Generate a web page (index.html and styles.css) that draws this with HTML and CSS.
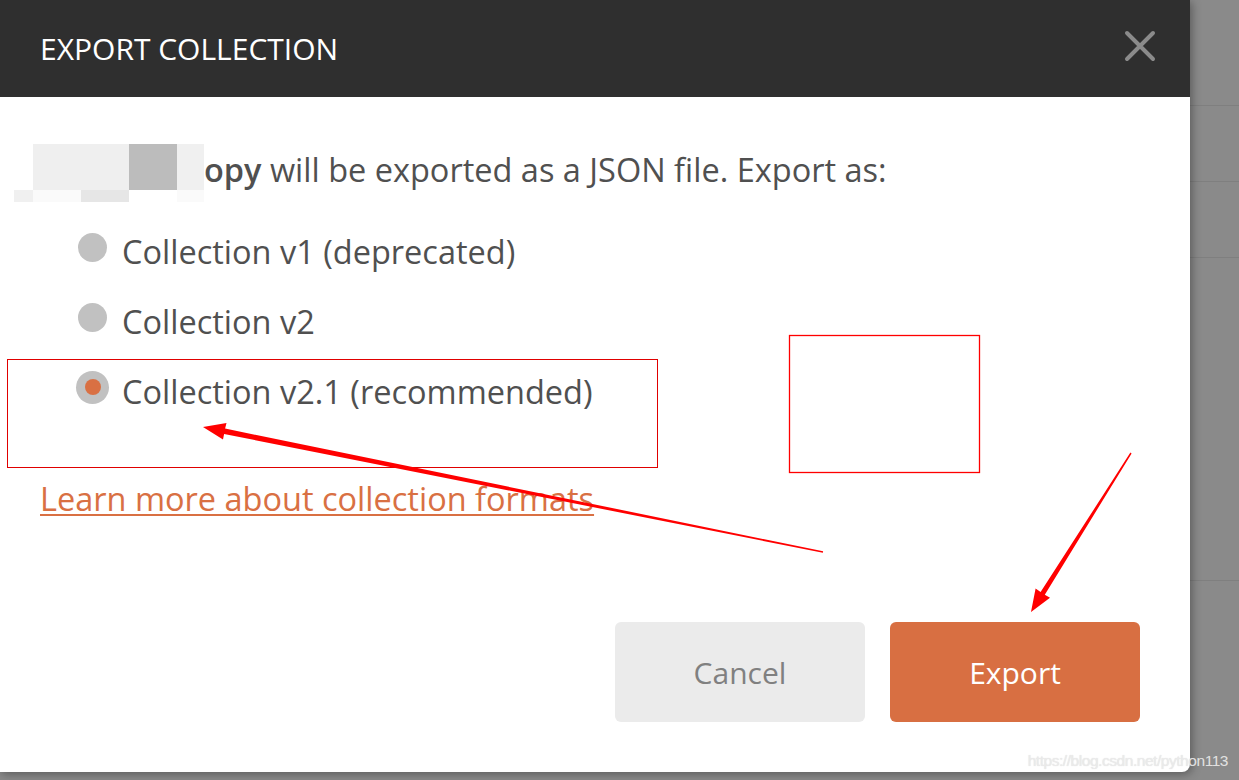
FILE: index.html
```html
<!DOCTYPE html>
<html lang="en">
<head>
    <meta charset="UTF-8">
    <meta name="viewport" content="width=device-width, initial-scale=1.0">
    <title>Export Collection</title>
    <link rel="stylesheet" href="styles.css">
</head>
<body>
    <!-- app behind the modal -->
    <div class="backdrop">
        <div class="row row-top"></div>
        <div class="row"></div>
        <div class="row"></div>
        <div class="row row-tall"></div>
        <div class="row row-last"></div>
    </div>

    <div class="modal">
        <div class="modal-header">
            <h2>EXPORT COLLECTION</h2>
            <svg class="close" width="32" height="32" viewBox="0 0 32 32">
                <path d="M3 3 L29 29 M29 3 L3 29" stroke="#8b8b8b" stroke-width="4" stroke-linecap="round"/>
            </svg>
        </div>

        <div class="modal-body">
            <p class="message">
                <span class="blur">
                    <span class="px px-a"></span><span class="px px-b"></span><span class="px px-c"></span>
                    <span class="px-row">
                        <span class="px px-d"></span><span class="px px-e"></span><span class="px px-f"></span><span class="px px-g"></span><span class="px px-h"></span>
                    </span>
                </span>
                <b>opy</b> will be exported as a JSON file. Export as:
            </p>

            <ul class="options">
                <li><span class="radio"></span>Collection v1 (deprecated)</li>
                <li><span class="radio"></span>Collection v2</li>
                <li><span class="radio checked"></span>Collection v2.1 (recommended)</li>
            </ul>

            <a class="learn" href="#">Learn more about collection formats</a>

            <div class="actions">
                <button class="btn btn-cancel">Cancel</button>
                <button class="btn btn-export">Export</button>
            </div>
        </div>
    </div>

    <!-- screenshot annotations -->
    <svg class="marks" width="1239" height="780" viewBox="0 0 1239 780">
        <rect x="7.5" y="359.5" width="650" height="108" fill="none" stroke="#e00000" stroke-width="1"/>
        <rect x="789.5" y="335.5" width="190" height="137" fill="none" stroke="#ff0000" stroke-width="1.3"/>
        <polygon fill="#ff0000" points="203,427 226.5,423 225.1,428.6 823.1,551.3 822.9,552.7 224.1,434 223,439.5"/>
        <polygon fill="#ff0000" points="1031,612 1035.6,588.6 1040.6,592.1 1130.4,452.6 1131.6,453.4 1044.8,594.7 1050,597.8"/>
    </svg>

    <div class="watermark">https://blog.csdn.net/python113</div>
</body>
</html>
```

FILE: styles.css
```css
body {
    margin: 0;
    width: 1239px;
    height: 780px;
    overflow: hidden;
    position: relative;
    font-family: 'Open Sans', sans-serif;
    background: #8a8a8a;
}
.backdrop {
    display: flex;
    flex-direction: column;
    height: 780px;
}
.row {
    height: 75px;
    border-bottom: 1px solid #7f7f7f;
}
.row-top {
    height: 105px;
}
.row-tall {
    height: 322px;
}
.row-last {
    border-bottom: none;
    flex: 1;
}
.modal {
    position: absolute;
    top: 0;
    left: 0;
    width: 1190px;
    height: 772px;
    background: #fff;
    border-bottom-right-radius: 8px;
    box-shadow: 2px 2px 10px rgba(0, 0, 0, 0.35);
    display: flex;
    flex-direction: column;
}
.modal-header {
    height: 97px;
    flex-shrink: 0;
    background: #2f2f2f;
    display: flex;
    align-items: center;
    justify-content: space-between;
    padding: 0 34px 0 40px;
}
.modal-header h2 {
    margin: 0;
    color: #fff;
    font-size: 30px;
    font-weight: 400;
}
.close {
    margin-top: -6px;
}
.modal-body {
    padding: 53px 50px 50px 40px;
    color: #505050;
    font-size: 32.5px;
    flex: 1;
    display: flex;
    flex-direction: column;
}
.message {
    margin: 0 0 0 -40px;
    padding-left: 204px;
    position: relative;
    line-height: 40px;
}
.message b {
    font-weight: 600;
}
/* pixelated redaction over the collection name */
.blur {
    position: absolute;
    left: 14px;
    top: -6px;
    width: 190px;
    display: flex;
    flex-wrap: wrap;
}
.px {
    display: block;
    height: 46px;
}
.px-a { width: 96px; background: #efefef; margin-left: 19px; }
.px-b { width: 48px; background: #bcbcbc; }
.px-c { width: 27px; background: #f0f0f0; }
.px-row {
    display: flex;
    width: 190px;
}
.px-row .px {
    height: 12px;
}
.px-d { width: 19px; background: #f0f0f0; }
.px-e { width: 48px; background: #fafafa; }
.px-f { width: 48px; background: #e6e6e6; }
.px-g { width: 48px; background: #fff; }
.px-h { width: 27px; background: #fafafa; }
.options {
    list-style: none;
    margin: 42px 0 0 38px;
    padding: 0;
    display: flex;
    flex-direction: column;
    gap: 30px;
}
.options li {
    display: flex;
    align-items: center;
    gap: 15px;
    line-height: 40px;
}
.radio {
    width: 29px;
    height: 29px;
    border-radius: 50%;
    background: #c1c1c1;
    margin-top: -10px;
}
.radio.checked {
    width: 33px;
    height: 33px;
    margin-left: -2px;
    margin-right: -2px;
    display: flex;
    align-items: center;
    justify-content: center;
}
.radio.checked::after {
    content: "";
    width: 16px;
    height: 16px;
    border-radius: 50%;
    background: #d97043;
}
.learn {
    margin-top: 67px;
    color: #d97043;
    text-decoration: underline;
    text-decoration-thickness: 2px;
    text-underline-offset: 3px;
    line-height: 40px;
    align-self: flex-start;
}
.actions {
    margin-top: auto;
    display: flex;
    justify-content: flex-end;
    gap: 25px;
}
.btn {
    width: 250px;
    height: 100px;
    border: none;
    border-radius: 6px;
    font-family: 'Open Sans', sans-serif;
    font-size: 30px;
    cursor: pointer;
}
.btn-cancel {
    background: #ebebeb;
    color: #808080;
}
.btn-export {
    background: #d86f42;
    color: #fff;
}
.marks {
    position: absolute;
    top: 0;
    left: 0;
    pointer-events: none;
}
.watermark {
    position: absolute;
    right: 11px;
    bottom: 10px;
    font-family: 'Liberation Sans', Arial, sans-serif;
    font-size: 15.5px;
    letter-spacing: -0.45px;
    color: rgba(236, 236, 236, 0.9);
    text-shadow: 0 0 1px rgba(160, 160, 160, 0.4);
}
```
